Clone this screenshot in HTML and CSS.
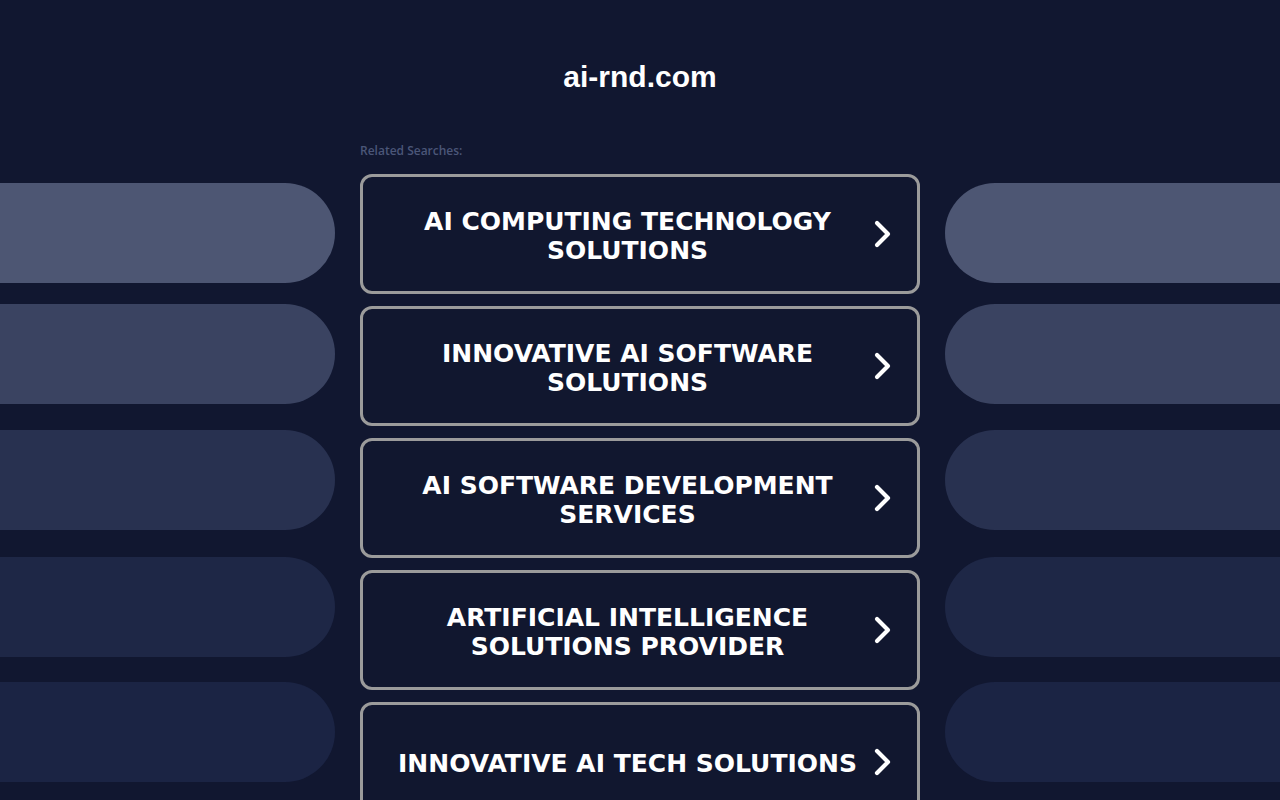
FILE: index.html
```html
<!DOCTYPE html>
<html>
<head>
<meta charset="utf-8">
<link rel="stylesheet" href="styles.css">
</head>
<body>
<header class="header"><h1 class="domain">ai-rnd.com</h1></header>
<div class="layout">
  <div class="side side-left">
    <div class="pill p1"></div>
    <div class="pill p2"></div>
    <div class="pill p3"></div>
    <div class="pill p4"></div>
    <div class="pill p5"></div>
  </div>
  <main class="center">
    <div class="related">Related Searches:</div>
    <a class="btn" href="#"><span class="btn-text">AI COMPUTING TECHNOLOGY SOLUTIONS</span><svg class="chev" viewBox="0 0 20 28" width="20" height="28"><path d="M4 3 L15 14 L4 25" fill="none" stroke="#fff" stroke-width="4.2" stroke-linecap="round" stroke-linejoin="round"/></svg></a>
    <a class="btn" href="#"><span class="btn-text">INNOVATIVE AI SOFTWARE SOLUTIONS</span><svg class="chev" viewBox="0 0 20 28" width="20" height="28"><path d="M4 3 L15 14 L4 25" fill="none" stroke="#fff" stroke-width="4.2" stroke-linecap="round" stroke-linejoin="round"/></svg></a>
    <a class="btn" href="#"><span class="btn-text">AI SOFTWARE DEVELOPMENT SERVICES</span><svg class="chev" viewBox="0 0 20 28" width="20" height="28"><path d="M4 3 L15 14 L4 25" fill="none" stroke="#fff" stroke-width="4.2" stroke-linecap="round" stroke-linejoin="round"/></svg></a>
    <a class="btn" href="#"><span class="btn-text">ARTIFICIAL INTELLIGENCE SOLUTIONS PROVIDER</span><svg class="chev" viewBox="0 0 20 28" width="20" height="28"><path d="M4 3 L15 14 L4 25" fill="none" stroke="#fff" stroke-width="4.2" stroke-linecap="round" stroke-linejoin="round"/></svg></a>
    <a class="btn" href="#"><span class="btn-text">INNOVATIVE AI TECH SOLUTIONS</span><svg class="chev" viewBox="0 0 20 28" width="20" height="28"><path d="M4 3 L15 14 L4 25" fill="none" stroke="#fff" stroke-width="4.2" stroke-linecap="round" stroke-linejoin="round"/></svg></a>
  </main>
  <div class="side side-right">
    <div class="pill p1"></div>
    <div class="pill p2"></div>
    <div class="pill p3"></div>
    <div class="pill p4"></div>
    <div class="pill p5"></div>
  </div>
</div>
</body>
</html>
```
FILE: styles.css
```css
html, body {
  margin: 0;
  padding: 0;
  background: #111730;
  height: 800px;
  overflow: hidden;
}
.header {
  height: 140px;
  display: flex;
  justify-content: center;
}
.domain {
  margin: 59px 0 0;
  font-family: "Liberation Sans", Arial, sans-serif;
  font-weight: 700;
  font-size: 30px;
  line-height: 36px;
  color: #ffffff;
}
.layout {
  display: grid;
  grid-template-columns: 335px 560px 335px;
  column-gap: 25px;
}
.side {
  display: flex;
  flex-direction: column;
  padding-top: 43px;
}
.pill {
  height: 100px;
  background: #4d5673;
}
.side-left .pill { border-radius: 0 50px 50px 0; }
.side-right .pill { border-radius: 50px 0 0 50px; }
.pill.p2 { margin-top: 21px; background: #3a4361; }
.pill.p3 { margin-top: 26px; background: #283150; }
.pill.p4 { margin-top: 27px; background: #1e2746; }
.pill.p5 { margin-top: 25px; background: #1b2444; }
.center {
  display: flex;
  flex-direction: column;
}
.related {
  font-family: "Open Sans", "Liberation Sans", sans-serif;
  font-size: 12px;
  font-weight: 600;
  color: #4b5678;
  line-height: 16px;
  margin-top: 3px;
  height: 31px;
}
.btn {
  box-sizing: border-box;
  height: 120px;
  margin-bottom: 12px;
  border: 3px solid #9b9b9b;
  border-radius: 12px;
  background: #11172f;
  display: flex;
  align-items: center;
  padding: 3px 24px 0 19px;
  text-decoration: none;
  flex-shrink: 0;
}
.btn-text {
  flex: 1;
  text-align: center;
  font-family: "DejaVu Sans", Verdana, sans-serif;
  font-weight: 700;
  font-size: 25px;
  line-height: 29px;
  color: #ffffff;
  padding: 0 14px;
}
.chev {
  flex-shrink: 0;
  display: block;
  margin-bottom: 3px;
}
```
